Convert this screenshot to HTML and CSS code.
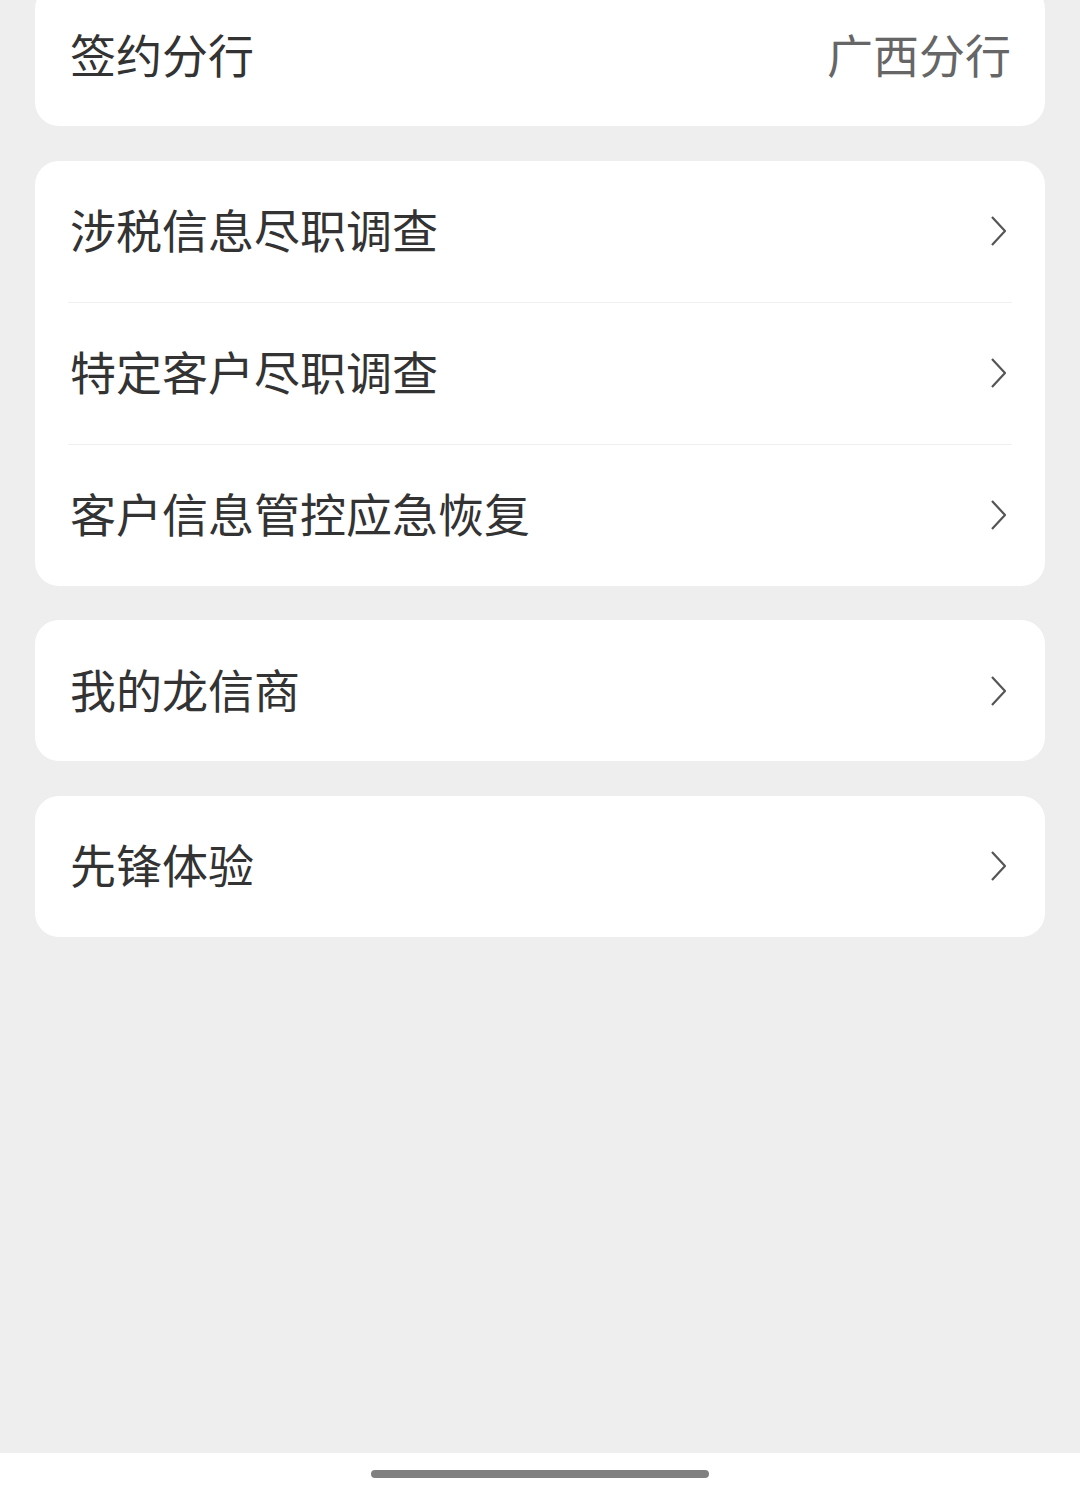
FILE: index.html
```html
<!DOCTYPE html>
<html lang="zh-CN">
<head>
  <meta charset="UTF-8">
  <meta name="viewport" content="width=device-width, initial-scale=1.0">
  <title>设置</title>
  <link rel="stylesheet" href="styles.css">
</head>
<body>
  <div class="page">
    <main class="content">
      <section class="card card-first">
        <div class="row">
          <span class="label">签约分行</span>
          <span class="value">广西分行</span>
        </div>
      </section>

      <section class="card">
        <a class="row" href="#">
          <span class="label">涉税信息尽职调查</span>
          <svg class="arrow" viewBox="0 0 16 30"><path d="M2 1 L15 15 L2 29"/></svg>
        </a>
        <div class="divider"></div>
        <a class="row" href="#">
          <span class="label">特定客户尽职调查</span>
          <svg class="arrow" viewBox="0 0 16 30"><path d="M2 1 L15 15 L2 29"/></svg>
        </a>
        <div class="divider"></div>
        <a class="row" href="#">
          <span class="label">客户信息管控应急恢复</span>
          <svg class="arrow" viewBox="0 0 16 30"><path d="M2 1 L15 15 L2 29"/></svg>
        </a>
      </section>

      <section class="card">
        <a class="row" href="#">
          <span class="label">我的龙信商</span>
          <svg class="arrow" viewBox="0 0 16 30"><path d="M2 1 L15 15 L2 29"/></svg>
        </a>
      </section>

      <section class="card">
        <a class="row" href="#">
          <span class="label">先锋体验</span>
          <svg class="arrow" viewBox="0 0 16 30"><path d="M2 1 L15 15 L2 29"/></svg>
        </a>
      </section>
    </main>

    <footer class="home-bar">
      <div class="home-indicator"></div>
    </footer>
  </div>
</body>
</html>
```

FILE: styles.css
```css
html, body {
  margin: 0;
  padding: 0;
}
body {
  font-family: "Noto Sans CJK SC", "Noto Sans", sans-serif;
  background-color: #eeeeee;
  color: #333333;
}
.page {
  display: flex;
  flex-direction: column;
  min-height: 100vh;
  overflow: hidden;
}
.content {
  flex: 1;
  padding: 0 35px;
  display: flex;
  flex-direction: column;
  gap: 34.5px;
}
.card {
  background-color: #ffffff;
  border-radius: 24px;
}
.card-first {
  margin-top: -15px;
}
.row {
  height: 141px;
  box-sizing: border-box;
  display: flex;
  align-items: center;
  justify-content: space-between;
  padding: 0 37px 6px 35px;
  text-decoration: none;
  color: inherit;
}
.label {
  font-size: 46px;
  line-height: 1;
  color: #333333;
}
.value {
  font-size: 46px;
  line-height: 1;
  color: #666666;
  margin-right: -3px;
}
.arrow {
  width: 16px;
  height: 30px;
  margin: 6px 2px 0 0;
}
.arrow path {
  fill: none;
  stroke: #555555;
  stroke-width: 2.2;
}
.divider {
  height: 1px;
  margin: 0 33px;
  background-color: #f0f0f0;
}
.home-bar {
  height: 45px;
  background-color: #ffffff;
  display: flex;
  justify-content: center;
  padding-top: 17px;
  box-sizing: border-box;
}
.home-indicator {
  width: 338px;
  height: 8px;
  border-radius: 4px;
  background-color: #808080;
}
```
